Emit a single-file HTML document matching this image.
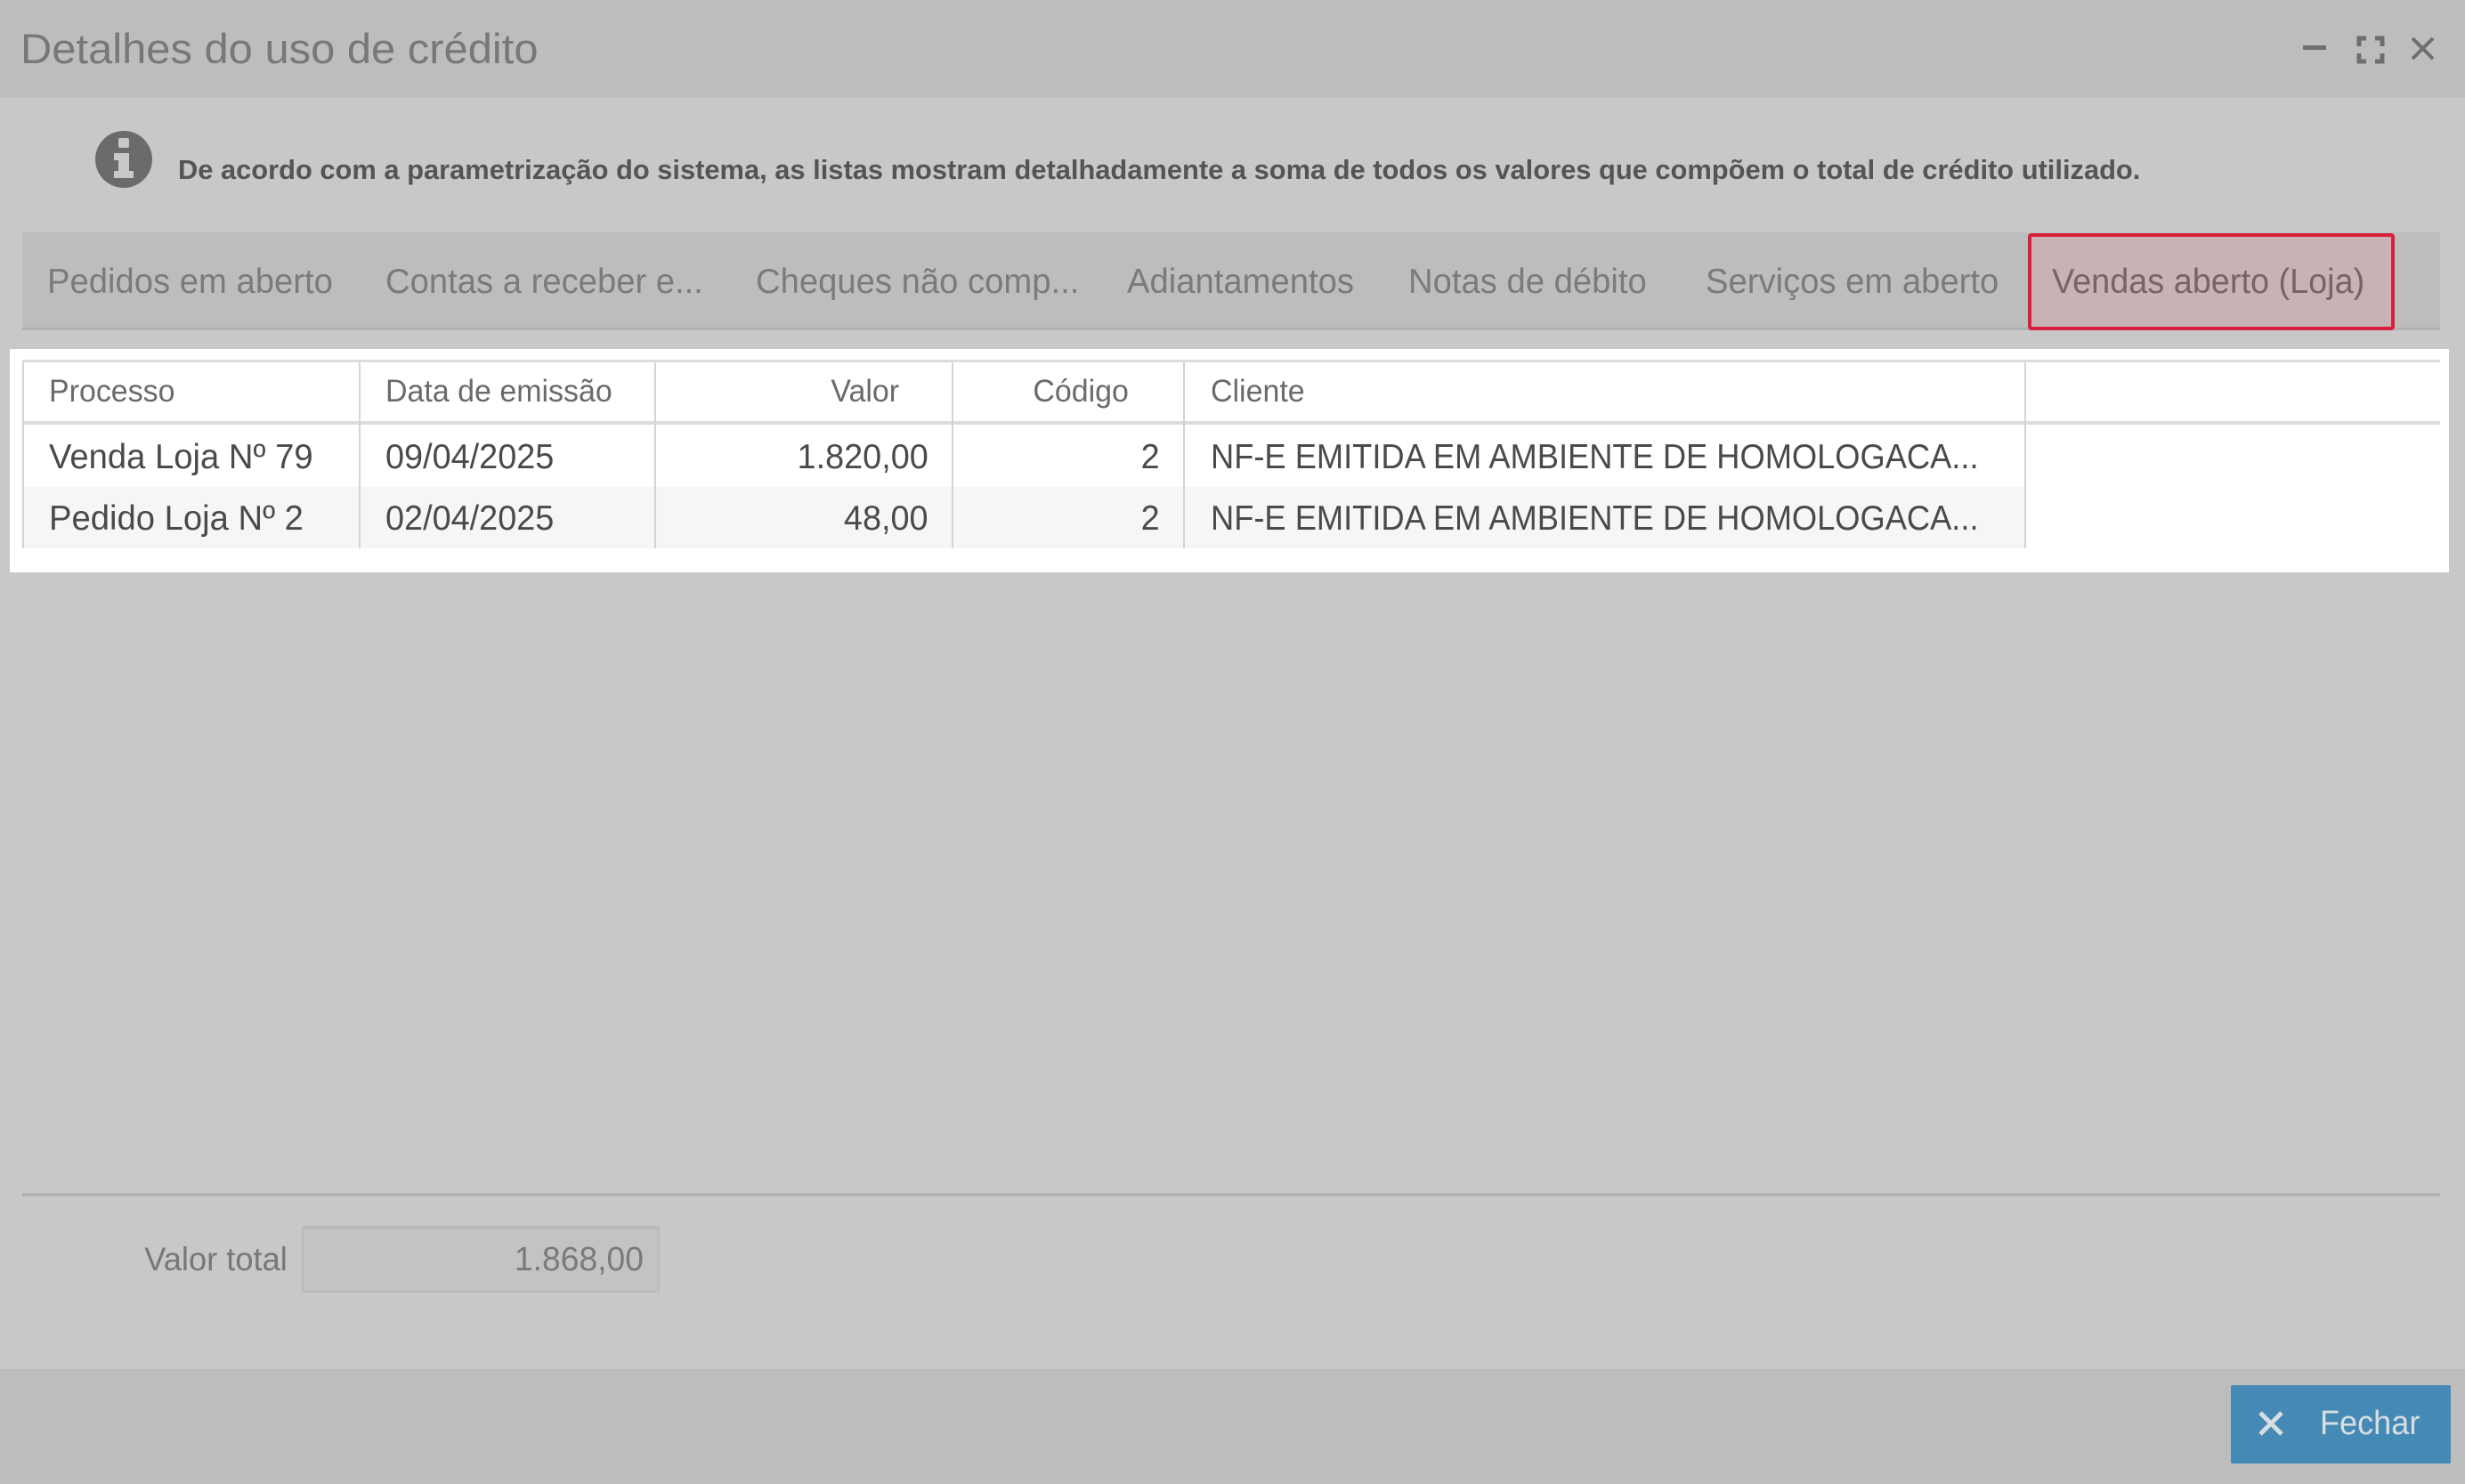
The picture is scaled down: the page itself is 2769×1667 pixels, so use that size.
<!DOCTYPE html>
<html><head><meta charset="utf-8"><style>
*{margin:0;padding:0;box-sizing:border-box}
body{width:2769px;height:1667px;background:#c8c8c8;font-family:"Liberation Sans",sans-serif;position:relative;overflow:hidden}
.a{position:absolute;white-space:nowrap}
.t{transform-origin:left center}
.r{transform-origin:right center}
</style></head><body>
<div class="a" style="left:0;top:0;width:2769px;height:110px;background:#bdbdbd"></div>
<div class="a t" style="left:23px;top:26px;font-size:47px;color:#787878;line-height:58px;transform:scaleX(1.04)">Detalhes do uso de crédito</div>
<svg class="a" style="left:2580px;top:30px" width="170" height="50" viewBox="0 0 170 50">
<rect x="7" y="21" width="26" height="5" fill="#6e6e6e"/>
<g stroke="#6e6e6e" stroke-width="5" fill="none"><path d="M70 22V13h8M88 13h8v9M96 30v9h-8M78 39h-8v-9"/></g>
<g stroke="#6e6e6e" stroke-width="4"><path d="M130 13L153 36M153 13L130 36"/></g>
</svg>
<svg class="a" style="left:106px;top:146px" width="66" height="66"><circle cx="33" cy="33" r="32" fill="#6b6b6b"/><rect x="27" y="9" width="12" height="11" rx="2" fill="#c8c8c8"/><path d="M22 26h17v20h5v8H22v-8h5v-12h-5z" fill="#c8c8c8"/></svg>
<div class="a t" style="left:200px;top:172px;font-size:31px;font-weight:bold;color:#555;line-height:38px;transform:scaleX(0.995)">De acordo com a parametrização do sistema, as listas mostram detalhadamente a soma de todos os valores que compõem o total de crédito utilizado.</div>
<div class="a" style="left:25px;top:261px;width:2716px;height:110px;background:#bdbdbd;border-bottom:3px solid #b1b1b1"></div>
<div class="a" style="left:2278px;top:262px;width:412px;height:109px;background:#c8b2b6;border:4px solid #d8203c;border-radius:4px"></div>
<div style="font-size:39px;color:#7b7b7b">
<div class="a t" style="left:53px;top:295px;transform:scaleX(0.98)">Pedidos em aberto</div>
<div class="a t" style="left:433px;top:295px;transform:scaleX(0.98)">Contas a receber e...</div>
<div class="a t" style="left:849px;top:295px;transform:scaleX(0.98)">Cheques não comp...</div>
<div class="a t" style="left:1266px;top:295px;transform:scaleX(0.98)">Adiantamentos</div>
<div class="a t" style="left:1582px;top:295px;transform:scaleX(0.98)">Notas de débito</div>
<div class="a t" style="left:1916px;top:295px;transform:scaleX(0.98)">Serviços em aberto</div>
<div class="a t" style="left:2305px;top:295px;color:#7a6266;transform:scaleX(0.97)">Vendas aberto (Loja)</div>
</div>
<div class="a" style="left:11px;top:392px;width:2740px;height:251px;background:#fff"></div>
<div class="a" style="left:25px;top:404px;width:2716px;height:3px;background:#dcdcdc"></div>
<div class="a" style="left:25px;top:473px;width:2716px;height:4px;background:#dcdcdc"></div>
<div class="a" style="left:25px;top:547px;width:2250px;height:69px;background:#f6f6f6"></div>
<div class="a" style="left:25px;top:407px;width:2px;height:209px;background:#d4d4d4"></div>
<div class="a" style="left:403px;top:407px;width:2px;height:209px;background:#d4d4d4"></div>
<div class="a" style="left:735px;top:407px;width:2px;height:209px;background:#d4d4d4"></div>
<div class="a" style="left:1069px;top:407px;width:2px;height:209px;background:#d4d4d4"></div>
<div class="a" style="left:1329px;top:407px;width:2px;height:209px;background:#d4d4d4"></div>
<div class="a" style="left:2274px;top:407px;width:2px;height:209px;background:#d4d4d4"></div>
<div style="font-size:35px;color:#6a6a6a">
<div class="a t" style="left:55px;top:420px;transform:scaleX(0.97)">Processo</div>
<div class="a t" style="left:433px;top:420px;transform:scaleX(0.97)">Data de emissão</div>
<div class="a r" style="right:1759px;top:420px;transform:scaleX(0.97)">Valor</div>
<div class="a r" style="right:1501px;top:420px;transform:scaleX(0.97)">Código</div>
<div class="a t" style="left:1360px;top:420px;transform:scaleX(0.97)">Cliente</div>
</div>
<div style="font-size:39px;color:#4a4a4a">
<div class="a t" style="left:55px;top:492px;transform:scaleX(0.98)">Venda Loja Nº 79</div>
<div class="a t" style="left:433px;top:492px;transform:scaleX(0.97)">09/04/2025</div>
<div class="a r" style="right:1726px;top:492px;transform:scaleX(0.97)">1.820,00</div>
<div class="a r" style="right:1466px;top:492px;transform:scaleX(0.97)">2</div>
<div class="a t" style="left:1360px;top:492px;transform:scaleX(0.93)">NF-E EMITIDA EM AMBIENTE DE HOMOLOGACA...</div>
<div class="a t" style="left:55px;top:561px;transform:scaleX(0.98)">Pedido Loja Nº 2</div>
<div class="a t" style="left:433px;top:561px;transform:scaleX(0.97)">02/04/2025</div>
<div class="a r" style="right:1726px;top:561px;transform:scaleX(0.97)">48,00</div>
<div class="a r" style="right:1466px;top:561px;transform:scaleX(0.97)">2</div>
<div class="a t" style="left:1360px;top:561px;transform:scaleX(0.93)">NF-E EMITIDA EM AMBIENTE DE HOMOLOGACA...</div>
</div>
<div class="a" style="left:25px;top:1340px;width:2716px;height:4px;background:#b3b3b3"></div>
<div class="a r" style="right:2446px;top:1394px;font-size:37px;color:#777;transform:scaleX(0.98)">Valor total</div>
<div class="a" style="left:339px;top:1377px;width:402px;height:75px;background:#c3c3c3;border:2px solid #bababa;border-top:4px solid #b8b8b8;border-radius:3px"></div>
<div class="a r" style="right:2046px;top:1394px;font-size:38px;color:#7a7a7a;transform:scaleX(0.98)">1.868,00</div>
<div class="a" style="left:0;top:1538px;width:2769px;height:129px;background:#bdbdbd"></div>
<div class="a" style="left:2506px;top:1556px;width:247px;height:88px;background:#4589b5;border-radius:2px"></div>
<svg class="a" style="left:2536px;top:1584px" width="30" height="30"><path d="M3 3L27 27M27 3L3 27" stroke="#d8dde2" stroke-width="5"/></svg>
<div class="a t" style="left:2606px;top:1578px;font-size:38px;color:#d8dde2;transform:scaleX(0.95)">Fechar</div>
</body></html>
